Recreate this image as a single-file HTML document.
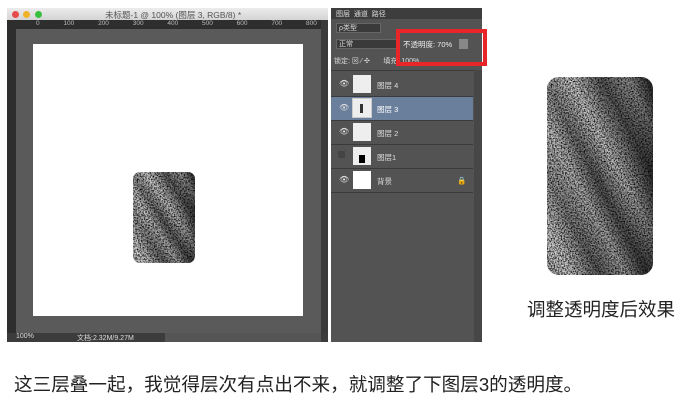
<!DOCTYPE html>
<html><head><meta charset="utf-8"><style>
*{margin:0;padding:0;box-sizing:border-box}
body{width:686px;height:403px;background:#fff;position:relative;overflow:hidden;font-family:"Liberation Sans","Noto Sans CJK SC",sans-serif}
.a{position:absolute}
.t{font-size:8px;color:#ddd;white-space:nowrap}
</style></head><body>
<svg width="0" height="0" style="position:absolute">
<defs>
<filter id="n" x="0" y="0" width="100%" height="100%">
<feTurbulence type="fractalNoise" baseFrequency="0.7" numOctaves="2" seed="3"/>
<feColorMatrix type="matrix" values="0 0 0 0 0  0 0 0 0 0  0 0 0 0 0  0 0 0 -2.4 1.5"/>
</filter>
<linearGradient id="g" x1="0" y1="1" x2="1" y2="0" spreadMethod="repeat" gradientTransform="scale(0.5)">
<stop offset="0" stop-color="#333"/><stop offset="0.25" stop-color="#999"/><stop offset="0.45" stop-color="#2a2a2a"/><stop offset="0.7" stop-color="#bbb"/><stop offset="1" stop-color="#333"/>
</linearGradient>
<linearGradient id="w" x1="0" y1="0" x2="1" y2="0">
<stop offset="0" stop-color="#fff" stop-opacity=".45"/><stop offset="0.5" stop-color="#fff" stop-opacity=".1"/><stop offset="1" stop-color="#000" stop-opacity=".35"/>
</linearGradient>
<clipPath id="c1"><rect width="62" height="91" rx="7"/></clipPath>
<clipPath id="c2"><rect width="106" height="198" rx="12"/></clipPath>
</defs></svg>
<div class="a" style="left:7px;top:8px;width:321px;height:334px;background:#535353"></div>
<div class="a" style="left:7px;top:8px;width:321px;height:12px;background:linear-gradient(#ececec,#d4d4d4)"></div>
<div class="a" style="left:12px;top:11px;width:7px;height:7px;border-radius:50%;background:#e84b4b"></div>
<div class="a" style="left:23px;top:11px;width:7px;height:7px;border-radius:50%;background:#f0b229"></div>
<div class="a" style="left:35px;top:11px;width:7px;height:7px;border-radius:50%;background:#3bbf3f"></div>
<div class="a t" style="left:105px;top:9px;color:#555;font-size:8.5px">未标题-1 @ 100% (图层 3, RGB/8) *</div>
<div class="a" style="left:7px;top:20px;width:314px;height:9px;background:#2e2e2e"></div>
<div class="a t" style="left:36px;top:20px;font-size:6.5px;color:#bbb;word-spacing:22px">0 100 200 300 400 500 600 700 800 900</div>
<div class="a" style="left:7px;top:20px;width:9px;height:313px;background:#2e2e2e"></div>
<div class="a" style="left:16px;top:29px;width:305px;height:304px;background:#5a5a5a"></div>
<div class="a" style="left:321px;top:20px;width:7px;height:313px;background:#3a3a3a"></div>
<div class="a" style="left:33px;top:44px;width:270px;height:272px;background:#fff"></div>
<svg class="a" style="left:133px;top:172px" width="62" height="91"><g clip-path="url(#c1)"><rect width="62" height="91" fill="url(#g)" opacity=".85"/><rect width="62" height="91" fill="url(#w)"/><rect width="62" height="91" fill="#fff" filter="url(#n)"/></g></svg>
<div class="a" style="left:7px;top:333px;width:321px;height:9px;background:#3c3c3c"></div>
<div class="a t" style="left:16px;top:333px;font-size:7px">100%</div>
<div class="a t" style="left:77px;top:333px;font-size:7px">文档:2.32M/9.27M</div>
<div class="a" style="left:165px;top:333px;width:156px;height:9px;background:#555"></div>
<div class="a" style="left:331px;top:8px;width:151px;height:334px;background:#535353"></div>
<div class="a" style="left:331px;top:8px;width:151px;height:11px;background:#3d3d3d"></div>
<div class="a t" style="left:336px;top:9px;font-size:7px">图层 &nbsp;通道 &nbsp;路径</div>
<div class="a" style="left:336px;top:23px;width:45px;height:10px;background:#3a3a3a;border:1px solid #666"></div>
<div class="a t" style="left:339px;top:23px;font-size:7px">ρ类型</div>
<div class="a" style="left:336px;top:39px;width:62px;height:10px;background:#3a3a3a;border:1px solid #666"></div>
<div class="a t" style="left:339px;top:39px;font-size:7px">正常</div>
<div class="a t" style="left:403px;top:39px;font-size:7.5px;color:#eee">不透明度: 70%</div>
<div class="a" style="left:459px;top:39px;width:9px;height:10px;background:#888"></div>
<div class="a t" style="left:334px;top:56px;font-size:7px">锁定: ⊠ ⁄ ✣ &nbsp; &nbsp; &nbsp; 填充: 100%</div>
<div class="a" style="left:331px;top:70px;width:143px;height:1px;background:#3a3a3a"></div>
<div class="a" style="left:331px;top:96px;width:142px;height:24px;background:#6a7f9c"></div>
<div class="a" style="left:331px;top:96px;width:142px;height:1px;background:#3a3a3a"></div>
<div class="a" style="left:331px;top:120px;width:142px;height:1px;background:#3a3a3a"></div>
<div class="a" style="left:331px;top:144px;width:142px;height:1px;background:#3a3a3a"></div>
<div class="a" style="left:331px;top:168px;width:142px;height:1px;background:#3a3a3a"></div>
<div class="a" style="left:331px;top:192px;width:142px;height:1px;background:#3a3a3a"></div>
<div class="a" style="left:474px;top:70px;width:8px;height:272px;background:#474747"></div>
<div class="a" style="left:353px;top:75px;width:18px;height:18px;background:#eee"></div>
<div class="a" style="left:353px;top:99px;width:18px;height:18px;background:#eee;outline:1px solid #ccc"></div>
<div class="a" style="left:360px;top:104px;width:3px;height:9px;background:#333"></div>
<div class="a" style="left:353px;top:123px;width:18px;height:18px;background:#eee"></div>
<div class="a" style="left:353px;top:147px;width:18px;height:18px;background:#eee"></div>
<div class="a" style="left:359px;top:155px;width:6px;height:8px;background:#000"></div>
<div class="a" style="left:353px;top:171px;width:18px;height:18px;background:#fff"></div>
<div class="a t" style="left:339px;top:79px">👁</div>
<div class="a t" style="left:339px;top:103px">👁</div>
<div class="a t" style="left:339px;top:127px">👁</div>
<div class="a" style="left:338px;top:151px;width:7px;height:7px;background:#444"></div>
<div class="a t" style="left:339px;top:175px">👁</div>
<div class="a t" style="left:377px;top:80px;font-size:7.5px">图层 4</div>
<div class="a t" style="left:377px;top:104px;font-size:7.5px;color:#fff">图层 3</div>
<div class="a t" style="left:377px;top:128px;font-size:7.5px">图层 2</div>
<div class="a t" style="left:377px;top:152px;font-size:7.5px">图层1</div>
<div class="a t" style="left:377px;top:176px;font-size:7.5px">背景</div>
<div class="a t" style="left:457px;top:176px;font-size:7.5px">🔒</div>
<div class="a" style="left:396px;top:29px;width:91px;height:37px;border:4px solid #e8262a"></div>
<svg class="a" style="left:547px;top:77px" width="106" height="198"><g clip-path="url(#c2)"><rect width="106" height="198" fill="url(#g)" opacity=".9"/><rect width="106" height="198" fill="url(#w)"/><rect width="106" height="198" fill="#fff" filter="url(#n)"/></g></svg>
<div class="a" style="left:527px;top:296px;font-size:18.5px;color:#222;white-space:nowrap">调整透明度后效果</div>
<div class="a" style="left:14px;top:370px;font-size:18.6px;color:#222;white-space:nowrap">这三层叠一起，我觉得层次有点出不来，就调整了下图层3的透明度。</div>
</body></html>
